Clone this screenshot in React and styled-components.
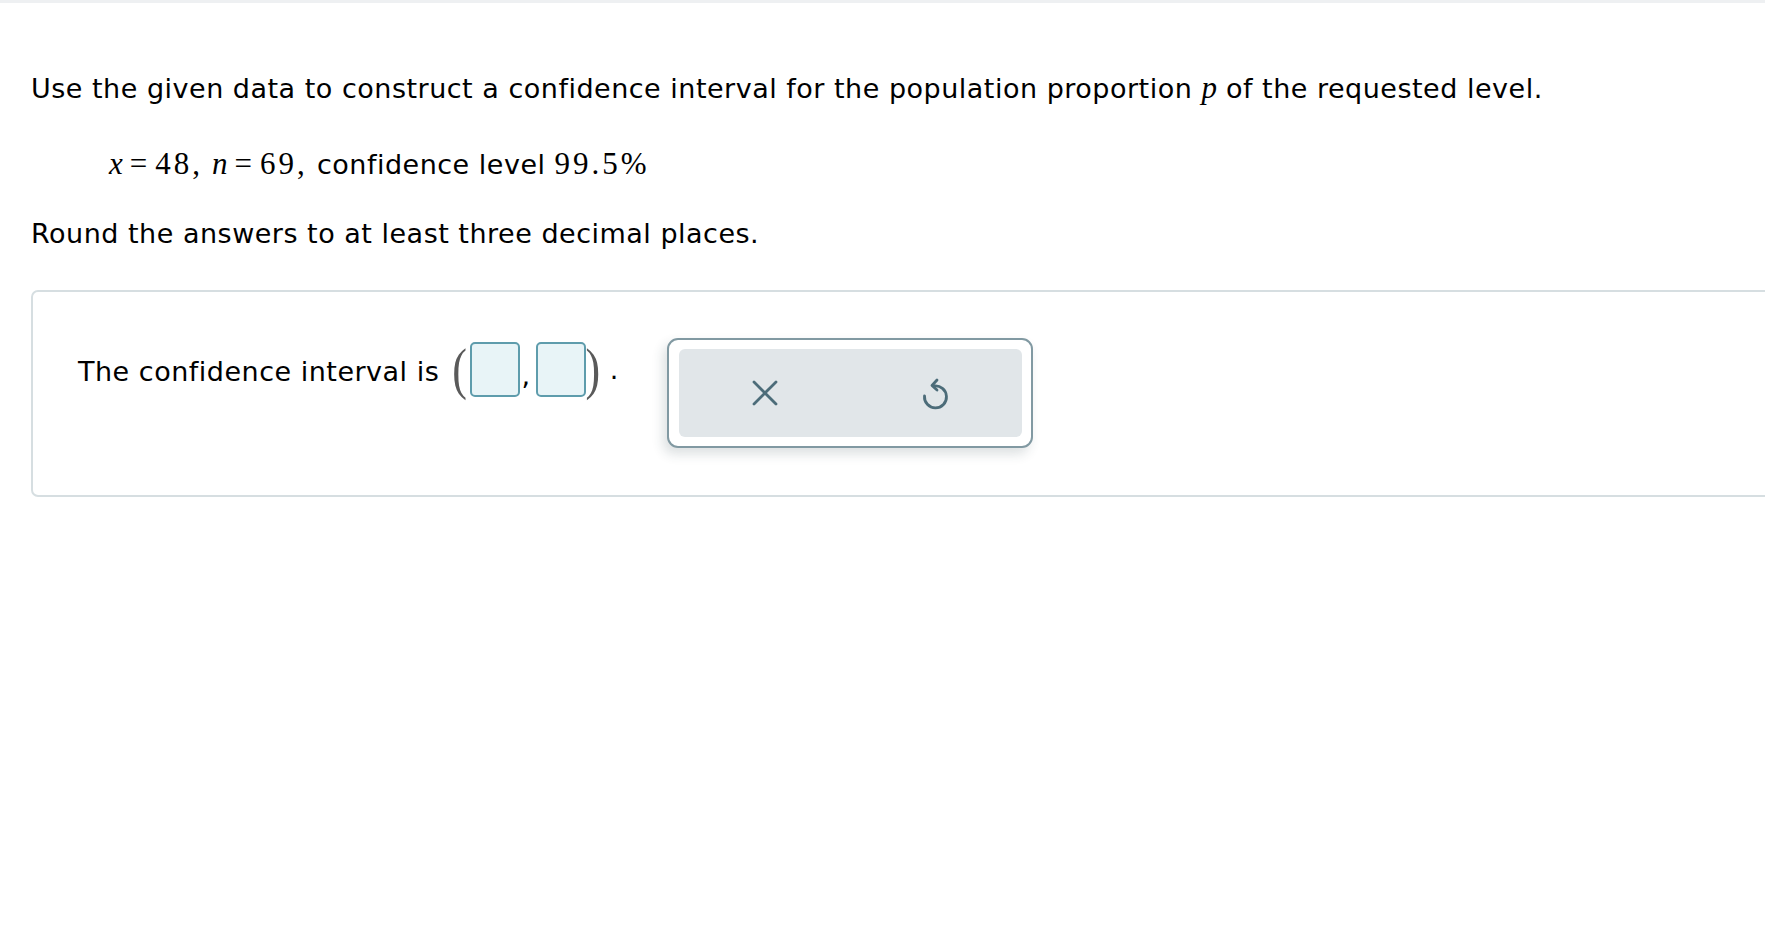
import React from 'react'
import styled, { createGlobalStyle } from 'styled-components'

const GlobalStyle = createGlobalStyle`
  html, body {
    margin: 0;
    padding: 0;
    background: #fff;
    overflow: hidden;
  }
  body {
    border-top: 3px solid #eef0f2;
    font-family: "DejaVu Sans", Verdana, sans-serif;
    color: #000;
  }
`

const Page = styled.div`
  padding: 0 0 0 31px;
`

const Para = styled.p`
  margin: ${props => props.top}px 0 0 0;
  font-size: 27px;
  letter-spacing: 0.5px;
  line-height: 32px;
  padding-left: ${props => props.indent || 0}px;
  white-space: nowrap;
`

const MathVar = styled.span`
  font-family: "Liberation Serif", "Times New Roman", serif;
  font-style: italic;
  font-size: 31px;
  letter-spacing: 0;
`

const MathNum = styled.span`
  font-family: "Liberation Serif", "Times New Roman", serif;
  font-size: 31px;
  letter-spacing: 3px;
`

const Eq = styled.span`
  font-family: "Liberation Serif", "Times New Roman", serif;
  font-size: 31px;
  letter-spacing: 0;
  padding: 0 8px 0 7px;
`

const Panel = styled.div`
  margin-top: 40px;
  width: calc(100% + 40px);
  height: 207px;
  box-sizing: border-box;
  border: 2px solid #d6dee1;
  border-radius: 7px;
  padding: 50px 0 0 45px;
  display: flex;
  align-items: flex-start;
`

const Sentence = styled.div`
  display: flex;
  align-items: center;
  font-size: 27px;
  letter-spacing: 0.5px;
  line-height: 32px;
  white-space: nowrap;
`

const Label = styled.span`
  padding-top: 4px;
`

const Paren = styled.span`
  font-family: "Liberation Serif", "Times New Roman", serif;
  font-size: 44px;
  line-height: 55px;
  color: #5a5a5a;
  display: inline-block;
  transform: scaleY(1.28);
  margin: ${props => props.m};
`

const AnswerBox = styled.span`
  display: inline-block;
  width: 50px;
  height: 55px;
  box-sizing: border-box;
  background: #e8f4f7;
  border: 2px solid #5e9cac;
  border-radius: 5px;
`

const Comma = styled.span`
  font-size: 27px;
  align-self: flex-end;
  margin: 0 5px 0 1px;
  line-height: 42px;
`

const Dot = styled.span`
  margin-left: 9px;
`

const ButtonGroup = styled.div`
  margin-left: 48px;
  margin-top: -4px;
  width: 366px;
  height: 110px;
  box-sizing: border-box;
  border: 2px solid #8199a2;
  border-radius: 11px;
  background: #fff;
  padding: 9px 9px 9px 10px;
  box-shadow: -4px 6px 12px rgba(40, 60, 70, 0.16);
`

const ButtonTray = styled.div`
  height: 100%;
  background: #e1e6e9;
  border-radius: 6px;
  display: grid;
  grid-template-columns: 1fr 1fr;
`

const IconButton = styled.button`
  border: none;
  background: transparent;
  display: flex;
  align-items: center;
  justify-content: center;
  padding: 0;
  cursor: pointer;
  color: #4c6c79;
`

const ClearIcon = () => (
  <svg width="26" height="26" viewBox="0 0 26 26" fill="none" stroke="currentColor" strokeWidth="2.8" strokeLinecap="round">
    <line x1="2" y1="2" x2="24" y2="24" />
    <line x1="24" y1="2" x2="2" y2="24" />
  </svg>
)

const UndoIcon = () => (
  <svg width="30" height="34" viewBox="0 0 30 34" fill="none" stroke="currentColor" strokeWidth="2.8" strokeLinecap="round" strokeLinejoin="round" style={{ marginTop: '2px' }}>
    <path d="M13 9 A11 11 0 1 1 3.5 19" />
    <path d="M16 3 L11 8.5 L16 13" />
  </svg>
)

export default function App() {
  return (
    <Page>
      <GlobalStyle />
      <Para top={69}>
        Use the given data to construct a confidence interval for the population proportion <MathVar>p</MathVar> of the requested level.
      </Para>
      <Para top={43} indent={78}>
        <MathVar>x</MathVar><Eq>=</Eq><MathNum>48,</MathNum> <MathVar>n</MathVar><Eq>=</Eq><MathNum>69,</MathNum> confidence level <MathNum>99.5%</MathNum>
      </Para>
      <Para top={37}>Round the answers to at least three decimal places.</Para>
      <Panel>
        <Sentence>
          <Label>The confidence interval is</Label>
          <Paren m="0 3px 0 13px">(</Paren>
          <AnswerBox />
          <Comma>,</Comma>
          <AnswerBox />
          <Paren m="0 0 0 0">)</Paren>
          <Dot>.</Dot>
        </Sentence>
        <ButtonGroup>
          <ButtonTray>
            <IconButton aria-label="clear"><ClearIcon /></IconButton>
            <IconButton aria-label="undo"><UndoIcon /></IconButton>
          </ButtonTray>
        </ButtonGroup>
      </Panel>
    </Page>
  )
}
